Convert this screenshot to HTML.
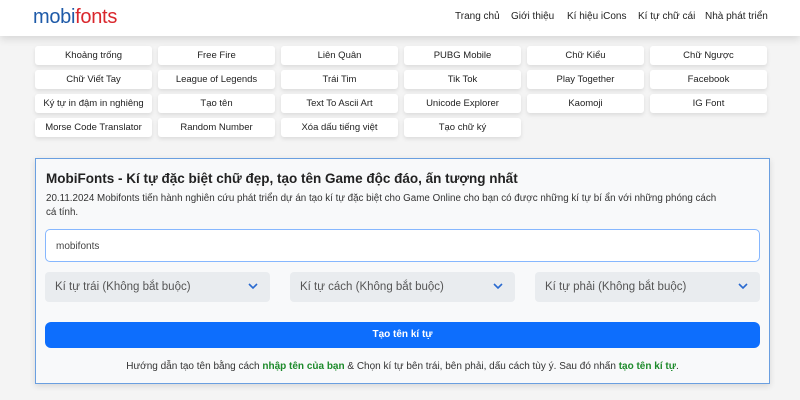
<!DOCTYPE html><html><head><meta charset="utf-8"><style>
*{box-sizing:border-box;margin:0;padding:0}
body{width:800px;height:400px;overflow:hidden;background:#f4f4f4;font-family:"Liberation Sans","DejaVu Sans",sans-serif;color:#212529;position:relative}
.hdr{position:absolute;left:0;top:0;width:800px;height:36px;background:#fff;box-shadow:0 3px 8px rgba(0,0,0,.12)}
.logo{position:absolute;left:33px;top:6px;font-size:20px;letter-spacing:-.3px}
.logo .a{color:#1e5aa8}.logo .b{color:#d9262c}
.nav{position:absolute;top:11px;font-size:10px;color:#222}
.btn{position:absolute;width:117px;height:19px;background:#fff;border-radius:3px;box-shadow:0 2px 4px rgba(0,0,0,.1);font-size:9.5px;text-align:center;line-height:19px;color:#222}
.panel{position:absolute;left:35px;top:158px;width:735px;height:226px;border:1px solid #6a9fe0;background:#f8f9fa;box-shadow:0 2px 6px rgba(0,0,0,.12)}
.t{position:absolute;left:10px;top:12px;font-size:13.5px;font-weight:600;color:#222}
.d{position:absolute;left:10px;top:33px;width:712px;font-size:9.8px;line-height:14px;color:#333}
.in{position:absolute;left:9px;top:70px;width:715px;height:33px;border:1px solid #86b7fe;border-radius:5px;background:#fff;font-size:10px;padding:11px 10px;color:#444}
.sel{position:absolute;top:113px;width:225px;height:30px;background:#e9ecef;border-radius:4px;font-size:11.5px;color:#555;padding:9px 10px}
.sel svg{position:absolute;right:12px;top:11px}
.go{position:absolute;left:9px;top:163px;width:715px;height:26px;background:#0d6efd;border-radius:6px;color:#fff;font-size:10px;font-weight:bold;text-align:center;line-height:26px}
.f{position:absolute;left:0;top:202px;width:733px;text-align:center;font-size:10px;color:#333}
.f b{color:#1c8a2a}
</style></head><body>
<div class="hdr"><div class="logo"><span class="a">mobi</span><span class="b">fonts</span></div>
<span class="nav" style="left:455px">Trang chủ</span><span class="nav" style="left:511px">Giới thiệu</span><span class="nav" style="left:567px">Kí hiệu iCons</span><span class="nav" style="left:638px">Kí tự chữ cái</span><span class="nav" style="left:705px">Nhà phát triển</span></div>
<div class="btn" style="left:35px;top:46px">Khoảng trống</div><div class="btn" style="left:158px;top:46px">Free Fire</div><div class="btn" style="left:281px;top:46px">Liên Quân</div><div class="btn" style="left:404px;top:46px">PUBG Mobile</div><div class="btn" style="left:527px;top:46px">Chữ Kiểu</div><div class="btn" style="left:650px;top:46px">Chữ Ngược</div>
<div class="btn" style="left:35px;top:70px">Chữ Viết Tay</div><div class="btn" style="left:158px;top:70px">League of Legends</div><div class="btn" style="left:281px;top:70px">Trái Tim</div><div class="btn" style="left:404px;top:70px">Tik Tok</div><div class="btn" style="left:527px;top:70px">Play Together</div><div class="btn" style="left:650px;top:70px">Facebook</div>
<div class="btn" style="left:35px;top:94px">Ký tự in đậm in nghiêng</div><div class="btn" style="left:158px;top:94px">Tạo tên</div><div class="btn" style="left:281px;top:94px">Text To Ascii Art</div><div class="btn" style="left:404px;top:94px">Unicode Explorer</div><div class="btn" style="left:527px;top:94px">Kaomoji</div><div class="btn" style="left:650px;top:94px">IG Font</div>
<div class="btn" style="left:35px;top:118px">Morse Code Translator</div><div class="btn" style="left:158px;top:118px">Random Number</div><div class="btn" style="left:281px;top:118px">Xóa dấu tiếng việt</div><div class="btn" style="left:404px;top:118px">Tạo chữ ký</div>
<div class="panel">
<div class="t">MobiFonts - Kí tự đặc biệt chữ đẹp, tạo tên Game độc đáo, ấn tượng nhất</div>
<div class="d">20.11.2024 Mobifonts tiến hành nghiên cứu phát triển dự án tạo kí tự đặc biệt cho Game Online cho bạn có được những kí tự bí ẩn với những phóng cách<br>cá tính.</div>
<div class="in">mobifonts</div>
<div class="sel" style="left:9px">Kí tự trái (Không bắt buộc)<svg width="10" height="7" viewBox="0 0 10 7"><path d="M1 1l4 4 4-4" fill="none" stroke="#2a6ad0" stroke-width="1.6"/></svg></div>
<div class="sel" style="left:254px">Kí tự cách (Không bắt buộc)<svg width="10" height="7" viewBox="0 0 10 7"><path d="M1 1l4 4 4-4" fill="none" stroke="#2a6ad0" stroke-width="1.6"/></svg></div>
<div class="sel" style="left:499px">Kí tự phải (Không bắt buộc)<svg width="10" height="7" viewBox="0 0 10 7"><path d="M1 1l4 4 4-4" fill="none" stroke="#2a6ad0" stroke-width="1.6"/></svg></div>
<div class="go">Tạo tên kí tự</div>
<div class="f">Hướng dẫn tạo tên bằng cách <b>nhập tên của bạn</b> &amp; Chọn kí tự bên trái, bên phải, dấu cách tùy ý. Sau đó nhấn <b>tạo tên kí tự</b>.</div>
</div>
</body></html>
